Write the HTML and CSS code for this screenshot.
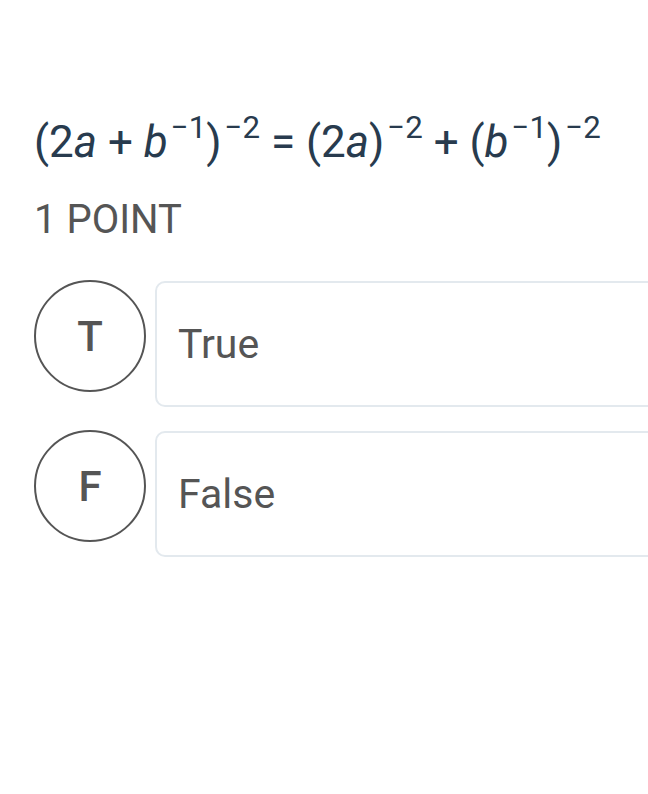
FILE: index.html
```html
<!DOCTYPE html>
<html>
<head>
<meta charset="utf-8">
<link rel="stylesheet" href="styles.css">
</head>
<body>
<div class="page">
  <div class="question">
    <span class="math">(2<i>a</i> + <i>b</i><sup>−1</sup>)<sup>−2</sup> = (2<i>a</i>)<sup>−2</sup> + (<i>b</i><sup>−1</sup>)<sup>−2</sup></span>
  </div>
  <div class="points">1 POINT</div>
  <div class="options">
    <div class="option">
      <div class="letter">T</div>
      <div class="answer">True</div>
    </div>
    <div class="option">
      <div class="letter">F</div>
      <div class="answer">False</div>
    </div>
  </div>
</div>
</body>
</html>
```
FILE: styles.css
```css
html, body {
  margin: 0;
  padding: 0;
  background: #ffffff;
  overflow: hidden;
}
.page {
  padding: 112px 0 0 34px;
  font-family: Roboto, "Liberation Sans", sans-serif;
}
.question {
  color: #283b4e;
  font-size: 44px;
  line-height: 60px;
  white-space: nowrap;
}
.math i {
  font-style: italic;
}
.math sup {
  font-size: 0.71em;
  line-height: 0;
  vertical-align: 0.6em;
  margin-left: 3px;
}
.points {
  margin-top: 26px;
  color: #555555;
  font-size: 40px;
  line-height: 44px;
}
.options {
  margin-top: 39px;
  display: flex;
  flex-direction: column;
  gap: 24px;
  margin-right: -60px;
}
.option {
  display: flex;
  align-items: flex-start;
  gap: 9px;
}
.letter {
  width: 108px;
  height: 108px;
  border: 2px solid #555555;
  border-radius: 50%;
  flex: none;
  display: flex;
  align-items: center;
  justify-content: center;
  color: #555555;
  font-size: 42px;
  font-weight: 500;
  margin-top: -1px;
}
.answer {
  flex: 1;
  box-sizing: border-box;
  height: 126px;
  border: 2px solid #e3e9ee;
  border-radius: 10px;
  display: flex;
  align-items: center;
  padding-left: 21px;
  color: #555555;
  font-size: 41px;
}
```
